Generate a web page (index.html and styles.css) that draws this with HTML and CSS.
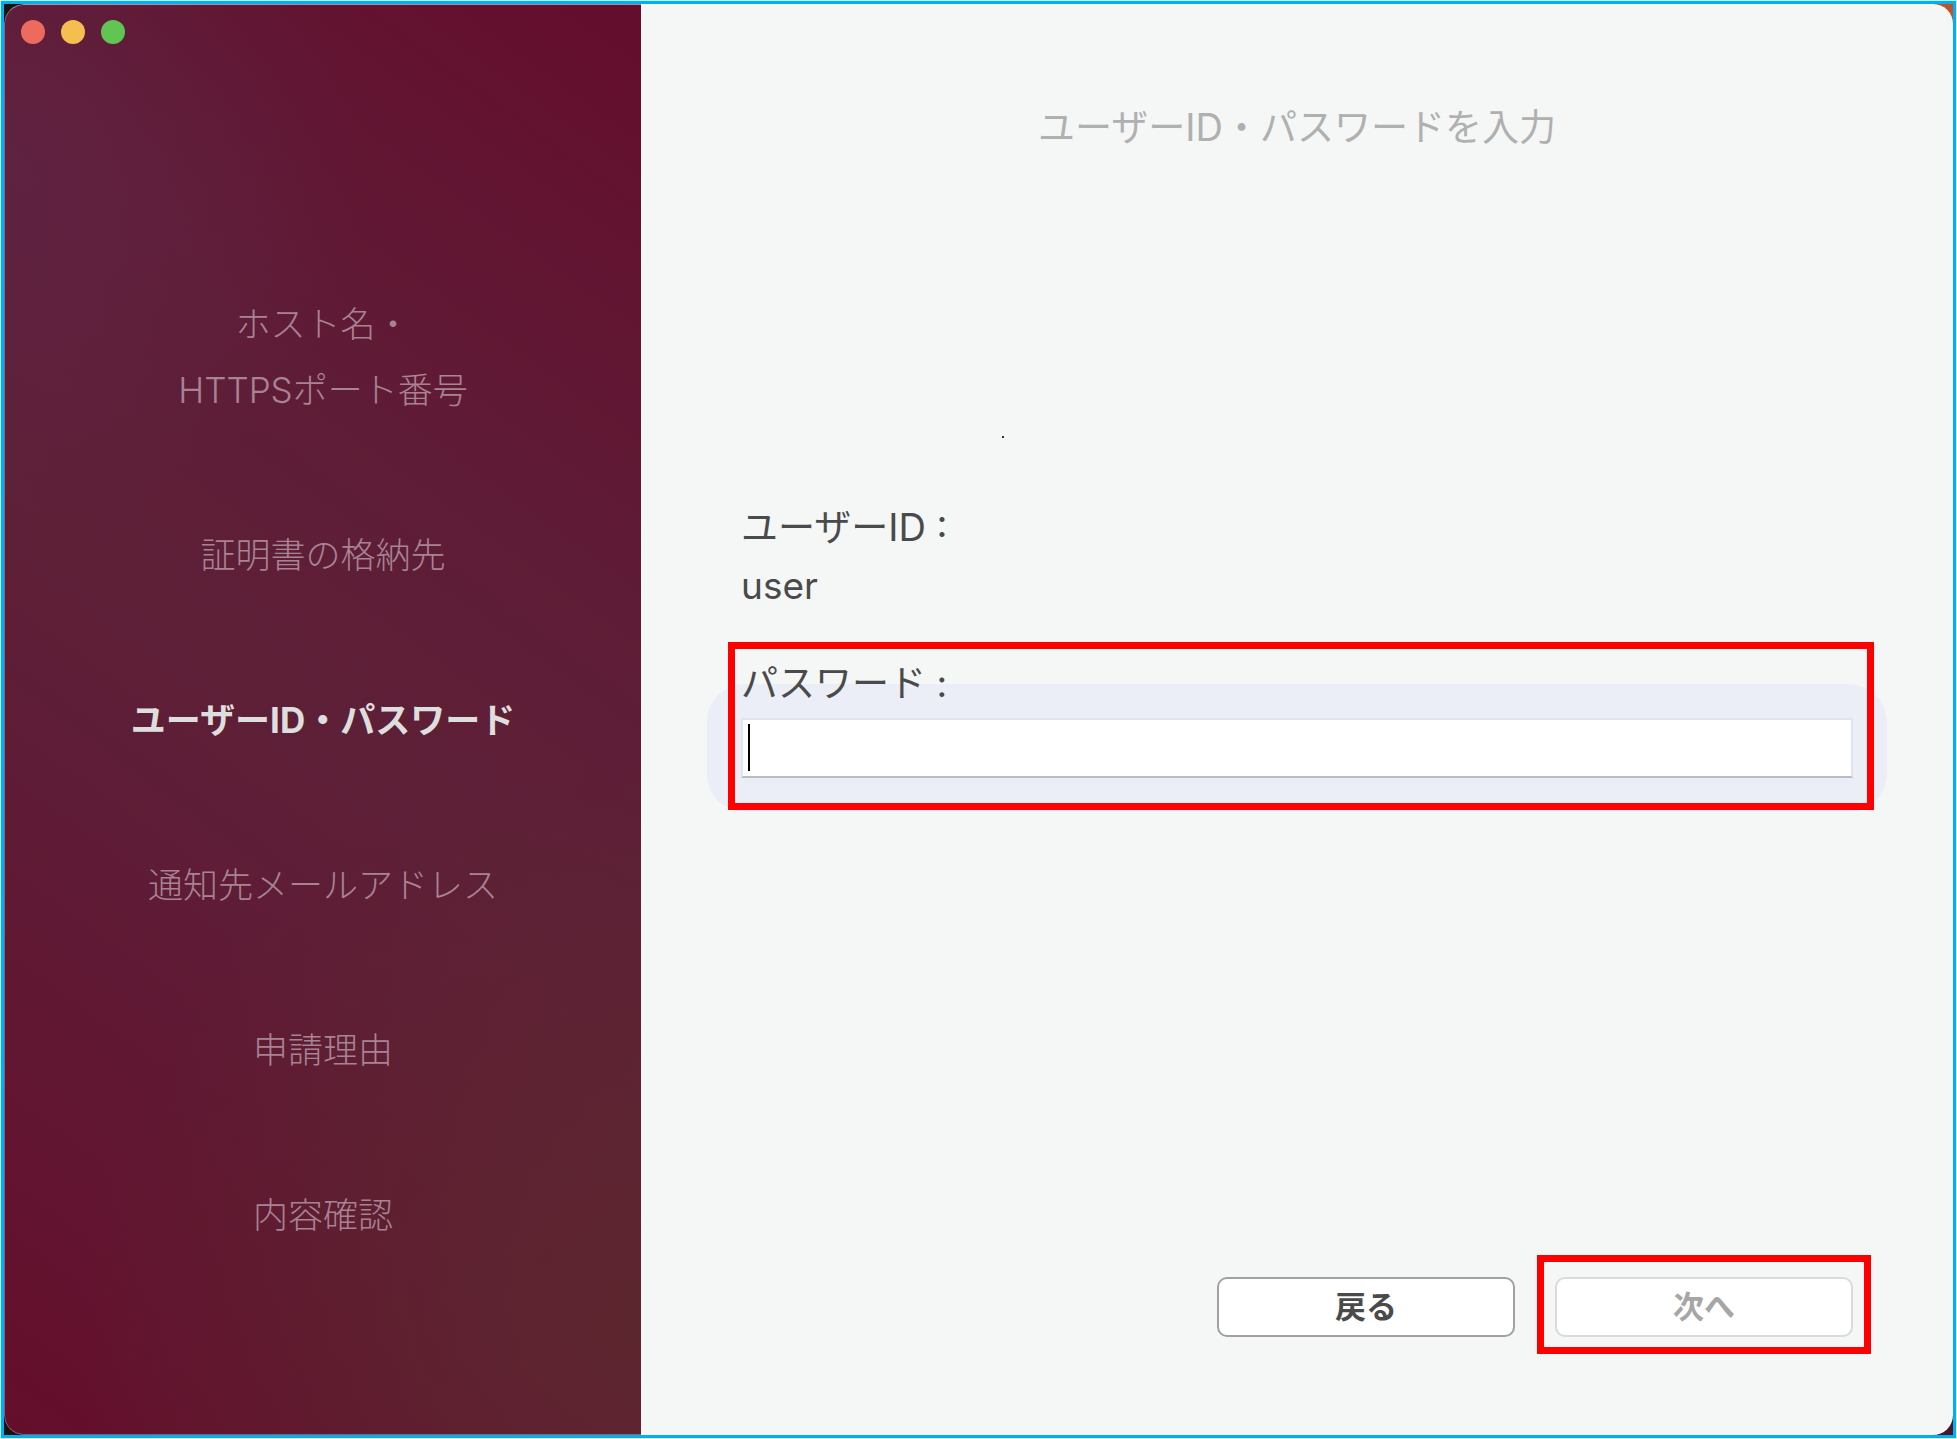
FILE: index.html
```html
<!DOCTYPE html>
<html lang="ja">
<head>
<meta charset="utf-8">
<meta name="viewport" content="width=device-width, initial-scale=1">
<title>ユーザーID・パスワードを入力</title>
<link rel="stylesheet" href="styles.css">
</head>
<body>
<div class="desktop">
  <div class="window">
    <aside class="sidebar">
      <div class="lights">
        <button class="light light-close" type="button" aria-label="閉じる"></button>
        <button class="light light-min" type="button" aria-label="しまう"></button>
        <button class="light light-zoom" type="button" aria-label="拡大"></button>
      </div>
      <ol class="steps">
        <li>ホスト名・<br>HTTPSポート番号</li>
        <li>証明書の格納先</li>
        <li class="current" aria-current="step">ユーザーID・パスワード</li>
        <li>通知先メールアドレス</li>
        <li>申請理由</li>
        <li>内容確認</li>
      </ol>
    </aside>
    <main class="content">
      <span class="speck"></span>
      <h1 class="title">ユーザー<span class="latin">ID</span>・パスワードを入力</h1>
      <form class="form">
        <dl class="account">
          <dt>ユーザー<span class="latin">ID :</span></dt>
          <dd>user</dd>
        </dl>
        <div class="field marked">
          <label for="password">パスワード :</label>
          <div class="input-wrap">
            <input id="password" type="password">
            <span class="caret"></span>
          </div>
        </div>
        <div class="actions">
          <button class="btn" type="button">戻る</button>
          <div class="marked marked-next"><button class="btn" type="submit" disabled>次へ</button></div>
        </div>
      </form>
    </main>
  </div>
</div>
</body>
</html>
```
FILE: styles.css
```css
* { box-sizing: border-box; margin: 0; padding: 0; }

body {
  min-height: 100vh;
  display: flex;
  padding: 1px;
  background: #c8eefb;
  font-family: Inter, "Noto Sans CJK JP", sans-serif;
  color: #4a4a4a;
}

.desktop {
  flex: 1;
  display: flex;
  border: 3px solid #00b0f0;
  background:
    linear-gradient(#bf5329, #bf5329) top right / 50% 50% no-repeat,
    linear-gradient(#4a1429, #4a1429) bottom right / 50% 50% no-repeat,
    #161412;
}

.window {
  flex: 1;
  display: grid;
  grid-template-columns: 637px 1fr;
  border-radius: 20px;
  overflow: hidden;
}

.sidebar {
  position: relative;
  padding: 15px 16px 80px;
  border: 1px solid rgba(255, 255, 255, .3);
  border-top-color: rgba(255, 255, 255, .5);
  border-right: 0;
  border-radius: 20px 0 0 20px;
  background:
    radial-gradient(circle at 0 12%, rgba(95, 36, 68, .8), transparent 360px) border-box,
    radial-gradient(circle at 100% 92%, rgba(92, 40, 46, .9), transparent 560px) border-box,
    linear-gradient(36deg, #640e2b, #5f1c36 36%, #5d2037 50%, #5f1c36 68%, #640d2c) border-box;
}

.lights { display: flex; gap: 16px; }

.light { width: 24px; height: 24px; border: 0; border-radius: 50%; }
.light-close { background: #ed6a5e; }
.light-min { background: #f5bf4f; }
.light-zoom { background: #61c554; }

.steps {
  display: flex;
  flex-direction: column;
  gap: 99px;
  margin-top: 247px;
  list-style: none;
  text-align: center;
  font-size: 35px;
  font-weight: 300;
  line-height: 66px;
  color: #a78393;
}

.steps .current { font-weight: 700; color: #dedede; }

.content {
  position: relative;
  display: flex;
  flex-direction: column;
  padding: 96px 100px 98px;
  background: #f5f7f6;
}

.speck {
  position: absolute;
  top: 432px;
  left: 361px;
  width: 2px;
  height: 2px;
  background: #333;
}

.title {
  text-align: center;
  font-size: 37px;
  font-weight: 400;
  line-height: 56px;
  color: #b0b0b0;
}

.latin { font-size: 38px; line-height: 1; }

.form {
  flex: 1;
  display: flex;
  flex-direction: column;
  margin-top: 343px;
  font-size: 37px;
  line-height: 58px;
}

.account { margin-bottom: 40px; }

.marked { position: relative; }

.marked::after {
  content: "";
  position: absolute;
  inset: -13px -21px -32px -13px;
  border: 7px solid #f00;
  pointer-events: none;
}

.marked-next::after { inset: -22px -18px -17px -18px; }

.field { display: flex; flex-direction: column; gap: 5px; }

.field label { position: relative; z-index: 1; }

.input-wrap { position: relative; display: flex; }

/* soft focus halo around the active text box */
.input-wrap::before {
  content: "";
  position: absolute;
  inset: -34px;
  border-radius: 38px;
  background: #ebeef7;
}

.input-wrap input {
  position: relative;
  flex: 1;
  min-width: 0;
  height: 60px;
  padding: 0 8px;
  border: 2px solid #e1e4ec;
  border-bottom-color: #b9bcc4;
  background: #fff;
  font: inherit;
  color: inherit;
  outline: none;
}

.caret {
  position: absolute;
  top: 6px;
  left: 7px;
  width: 2px;
  height: 47px;
  background: #000;
}

.actions {
  display: flex;
  justify-content: flex-end;
  gap: 40px;
  margin-top: auto;
}

.btn {
  display: block;
  width: 298px;
  height: 60px;
  border: 2px solid #a0a0a5;
  border-radius: 10px;
  background: #fff;
  font: inherit;
  font-size: 31px;
  font-weight: 700;
  line-height: 56px;
  color: #4a4a4a;
}

.btn:disabled { border-color: #dadada; color: #a6a6a6; }
```
